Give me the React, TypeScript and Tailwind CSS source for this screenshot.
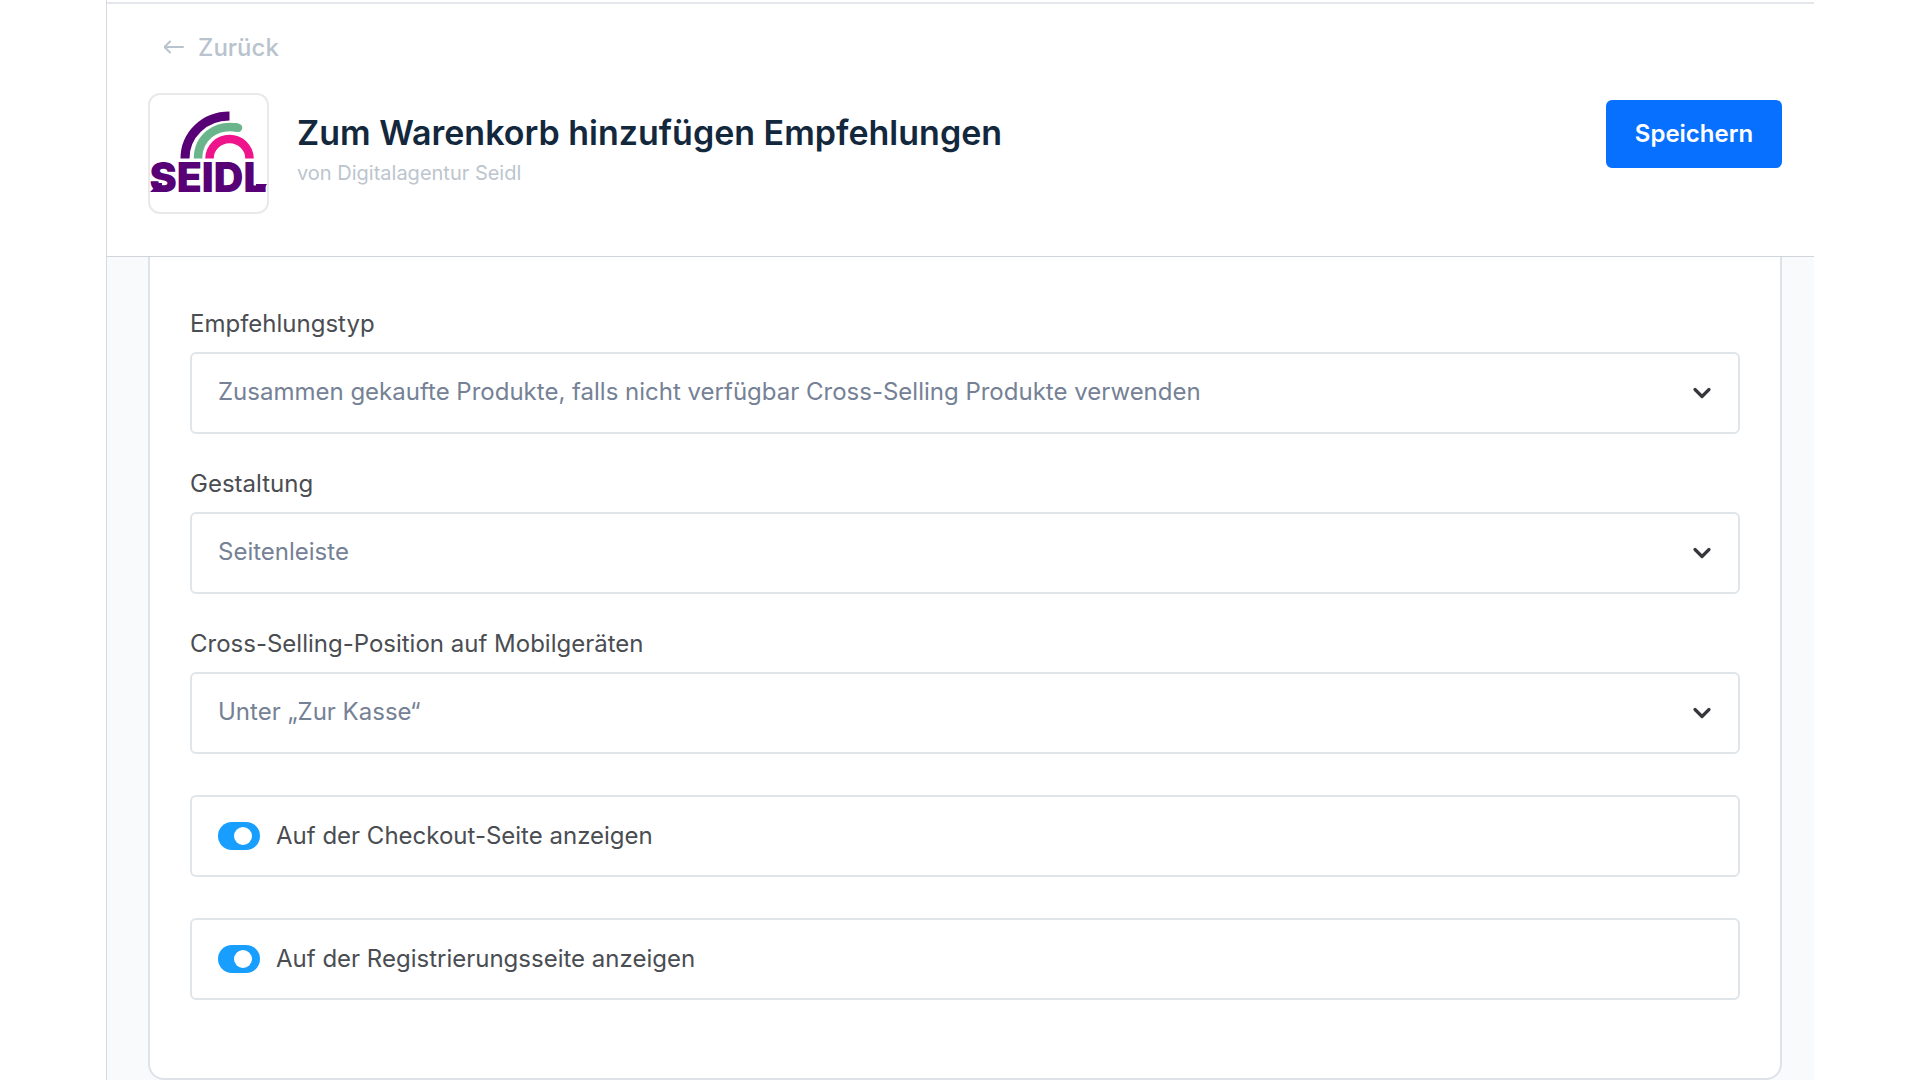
import { FC, useState } from "react";

type SelectFieldProps = {
  id: string;
  label: string;
  options: string[];
};

type ToggleFieldProps = {
  id: string;
  label: string;
};

const Logo: FC = () => (
  <svg viewBox="0 0 117 117" className="h-full w-full" role="img" aria-label="Seidl">
    <path d="M35 63.5 C35 40 54 21 79.5 21" fill="none" stroke="#580075" strokeWidth="9" />
    <path d="M48 63.5 C48 43 65 29 87 32.5" fill="none" stroke="#6bb58c" strokeWidth="8.5" />
    <path d="M86 32.3 L88 32.8" stroke="#6bb58c" strokeWidth="8.5" strokeLinecap="round" />
    <path d="M59.5 63.5 A20 19.5 0 0 1 99.5 63.5" fill="none" stroke="#f0148c" strokeWidth="8.5" />
    <path d="M0 97 L9 88 L12 88 L12 97 Z M106 97 L112 97 L117 89 L106 89 Z" fill="#580075" />
    <text x="58" y="97" textAnchor="middle" fill="#580075" fontFamily="Inter, sans-serif" fontWeight="900" fontSize="41">
      SEIDL
    </text>
  </svg>
);

const SelectField: FC<SelectFieldProps> = ({ id, label, options }) => (
  <div className="flex flex-col gap-3">
    <label htmlFor={id} className="text-2xl leading-8 text-[#4a4d52]">
      {label}
    </label>
    <div className="relative">
      <select
        id={id}
        className="h-[82px] w-full appearance-none rounded-md border-2 border-[#e0e5ea] bg-white pr-20 pb-0.5 pl-[26px] text-2xl text-[#758195]"
      >
        {options.map((option) => (
          <option key={option}>{option}</option>
        ))}
      </select>
      <svg
        className="pointer-events-none absolute inset-y-0 right-[28px] my-auto h-5 w-5"
        viewBox="0 0 20 20"
        fill="none"
        stroke="#36383c"
        strokeWidth="3.2"
        strokeLinecap="round"
        strokeLinejoin="round"
        aria-hidden="true"
      >
        <path d="M3 6.5 L10 13.5 L17 6.5" />
      </svg>
    </div>
  </div>
);

const ToggleField: FC<ToggleFieldProps> = ({ id, label }) => {
  const [checked, setChecked] = useState(true);

  return (
    <div className="flex h-[82px] items-center gap-4 rounded-md border-2 border-[#e0e5ea] bg-white pl-[26px]">
      <input
        id={id}
        type="checkbox"
        role="switch"
        checked={checked}
        onChange={(event) => setChecked(event.target.checked)}
        className="flex h-7 w-[42px] shrink-0 appearance-none items-center rounded-full bg-slate-300 px-2 before:h-[18px] before:w-[18px] before:rounded-full before:bg-white checked:justify-end checked:bg-[#189eff]"
      />
      <label htmlFor={id} className="text-2xl leading-8 text-[#4a4d52]">
        {label}
      </label>
    </div>
  );
};

const App: FC = () => {
  return (
    <div className="min-h-screen bg-white px-[106px] font-['Inter',sans-serif]">
      <div className="flex min-h-screen flex-col border-l border-[#d5dadf] bg-[#f9fafb]">
        <header className="border-b border-[#cfd5db] bg-white pt-0.5">
          <div className="border-t-2 border-[#e4e7eb] pt-7 pr-8 pb-[42px] pl-[41px]">
            <a href="#" className="ml-4 inline-flex items-center gap-[14px] text-2xl leading-8 font-medium text-[#b9c3cd]">
              <svg
                className="h-5 w-5"
                viewBox="0 0 20 20"
                fill="none"
                stroke="currentColor"
                strokeWidth="2"
                strokeLinecap="round"
                strokeLinejoin="round"
                aria-hidden="true"
              >
                <path d="M19 9 H1 M6 3.5 L0.5 9 L6 14.5" />
              </svg>
              Zurück
            </a>
            <div className="mt-[29px] flex items-start">
              <div className="h-[121px] w-[121px] shrink-0 overflow-hidden rounded-xl border-2 border-[#e9e9eb] bg-white">
                <Logo />
              </div>
              <div className="ml-7 flex-1 pt-[18px]">
                <h1 className="text-[34px] leading-[44px] font-semibold text-[#14283d]">
                  Zum Warenkorb hinzufügen Empfehlungen
                </h1>
                <p className="mt-1 text-xl leading-7 text-[#bcc5ce]">von Digitalagentur Seidl</p>
              </div>
              <button
                type="button"
                className="mt-[7px] h-[68px] w-44 rounded-md bg-[#0870ff] text-2xl font-semibold text-white"
              >
                Speichern
              </button>
            </div>
          </div>
        </header>

        <main className="pr-8 pl-[41px]">
          <form className="flex flex-col gap-[41px] rounded-b-2xl border-2 border-t-0 border-[#dfe2e8] bg-white px-10 pt-[51px] pb-[78px]">
            <div className="flex flex-col gap-[34px]">
              <SelectField
                id="empfehlungstyp"
                label="Empfehlungstyp"
                options={["Zusammen gekaufte Produkte, falls nicht verfügbar Cross-Selling Produkte verwenden"]}
              />
              <SelectField id="gestaltung" label="Gestaltung" options={["Seitenleiste"]} />
              <SelectField
                id="position"
                label="Cross-Selling-Position auf Mobilgeräten"
                options={["Unter „Zur Kasse“"]}
              />
            </div>
            <ToggleField id="checkout" label="Auf der Checkout-Seite anzeigen" />
            <ToggleField id="registrierung" label="Auf der Registrierungsseite anzeigen" />
          </form>
        </main>
      </div>
    </div>
  );
};

export default App;
